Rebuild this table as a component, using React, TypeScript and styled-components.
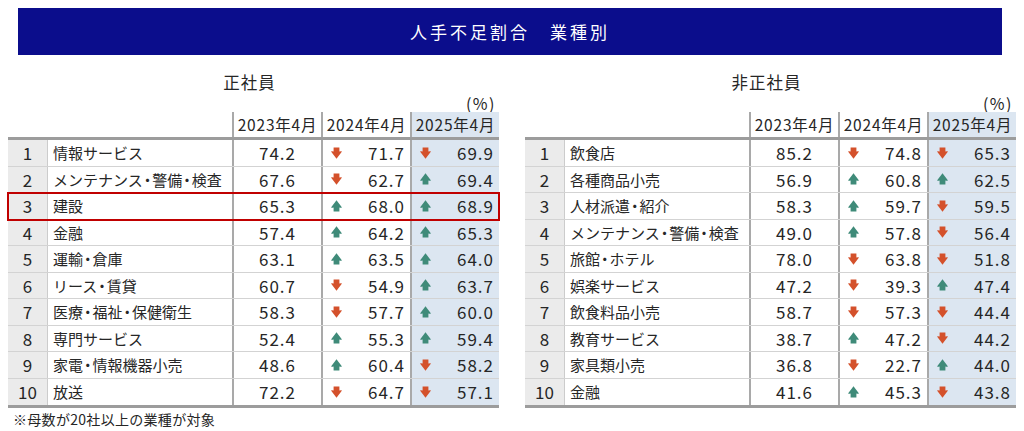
import React from 'react';
import styled, { createGlobalStyle } from 'styled-components';

const GlobalStyle = createGlobalStyle`
  html, body {
    margin: 0;
    padding: 0;
    background: #ffffff;
  }
  body {
    font-family: "Noto Sans CJK JP", "Noto Sans", sans-serif;
    color: #262626;
  }
`;

type Trend = 'up' | 'down';

interface RowData {
  rank: number;
  name: string;
  y2023: string;
  t2024: Trend;
  y2024: string;
  t2025: Trend;
  y2025: string;
}

const regular: RowData[] = [
  { rank: 1, name: '情報サービス', y2023: '74.2', t2024: 'down', y2024: '71.7', t2025: 'down', y2025: '69.9' },
  { rank: 2, name: 'メンテナンス・警備・検査', y2023: '67.6', t2024: 'down', y2024: '62.7', t2025: 'up', y2025: '69.4' },
  { rank: 3, name: '建設', y2023: '65.3', t2024: 'up', y2024: '68.0', t2025: 'up', y2025: '68.9' },
  { rank: 4, name: '金融', y2023: '57.4', t2024: 'up', y2024: '64.2', t2025: 'up', y2025: '65.3' },
  { rank: 5, name: '運輸・倉庫', y2023: '63.1', t2024: 'up', y2024: '63.5', t2025: 'up', y2025: '64.0' },
  { rank: 6, name: 'リース・賃貸', y2023: '60.7', t2024: 'down', y2024: '54.9', t2025: 'up', y2025: '63.7' },
  { rank: 7, name: '医療・福祉・保健衛生', y2023: '58.3', t2024: 'down', y2024: '57.7', t2025: 'up', y2025: '60.0' },
  { rank: 8, name: '専門サービス', y2023: '52.4', t2024: 'up', y2024: '55.3', t2025: 'up', y2025: '59.4' },
  { rank: 9, name: '家電・情報機器小売', y2023: '48.6', t2024: 'up', y2024: '60.4', t2025: 'down', y2025: '58.2' },
  { rank: 10, name: '放送', y2023: '72.2', t2024: 'down', y2024: '64.7', t2025: 'down', y2025: '57.1' },
];

const nonRegular: RowData[] = [
  { rank: 1, name: '飲食店', y2023: '85.2', t2024: 'down', y2024: '74.8', t2025: 'down', y2025: '65.3' },
  { rank: 2, name: '各種商品小売', y2023: '56.9', t2024: 'up', y2024: '60.8', t2025: 'up', y2025: '62.5' },
  { rank: 3, name: '人材派遣・紹介', y2023: '58.3', t2024: 'up', y2024: '59.7', t2025: 'down', y2025: '59.5' },
  { rank: 4, name: 'メンテナンス・警備・検査', y2023: '49.0', t2024: 'up', y2024: '57.8', t2025: 'down', y2025: '56.4' },
  { rank: 5, name: '旅館・ホテル', y2023: '78.0', t2024: 'down', y2024: '63.8', t2025: 'down', y2025: '51.8' },
  { rank: 6, name: '娯楽サービス', y2023: '47.2', t2024: 'down', y2024: '39.3', t2025: 'up', y2025: '47.4' },
  { rank: 7, name: '飲食料品小売', y2023: '58.7', t2024: 'down', y2024: '57.3', t2025: 'down', y2025: '44.4' },
  { rank: 8, name: '教育サービス', y2023: '38.7', t2024: 'up', y2024: '47.2', t2025: 'down', y2025: '44.2' },
  { rank: 9, name: '家具類小売', y2023: '36.8', t2024: 'down', y2024: '22.7', t2025: 'up', y2025: '44.0' },
  { rank: 10, name: '金融', y2023: '41.6', t2024: 'up', y2024: '45.3', t2025: 'down', y2025: '43.8' },
];

const COLS = '40px 184px 89px 89px 89px';
const BLUE = '#dce6f1';
const RULE = '#a9a9a9';

const Page = styled.div`
  width: 1024px;
  height: 431px;
  box-sizing: border-box;
  padding: 8px 8px 0 8px;
  overflow: hidden;
`;

const Banner = styled.div`
  margin: 0 14px 0 10px;
  height: 47px;
  background: #0b0d8c;
  color: #ffffff;
  display: flex;
  align-items: center;
  justify-content: center;
  font-size: 17px;
  letter-spacing: 3px;
`;

const Panels = styled.div`
  display: flex;
  gap: 26px;
`;

const Panel = styled.div`
  width: 491px;
  display: flex;
  flex-direction: column;
`;

const PanelTitle = styled.div`
  margin-top: 16px;
  height: 23px;
  line-height: 23px;
  font-size: 16.5px;
  letter-spacing: 1px;
  text-align: center;
  padding-right: 8px;
`;

const Unit = styled.div`
  height: 18px;
  line-height: 18px;
  font-size: 16px;
  letter-spacing: 1.5px;
  text-align: right;
  padding-right: 3px;
`;

const HeaderRow = styled.div`
  display: grid;
  grid-template-columns: ${COLS};
  height: 25px;
  border-bottom: 3px solid #9c9c9c;
`;

const HeadCell = styled.div<{ $hi?: boolean }>`
  border-left: 2px solid ${RULE};
  background: ${(p) => (p.$hi ? BLUE : 'transparent')};
  font-size: 15.5px;
  letter-spacing: 0.8px;
  line-height: 25px;
  text-align: center;
  white-space: nowrap;
`;

const Body = styled.div`
  border-bottom: 3px solid #9c9c9c;
`;

const Row = styled.div<{ $mark?: boolean }>`
  display: grid;
  grid-template-columns: ${COLS};
  height: 26.5px;
  box-sizing: border-box;
  border-bottom: 1px solid #d3d3d3;
  position: relative;
  z-index: ${(p) => (p.$mark ? 2 : 0)};
  outline: ${(p) => (p.$mark ? '2.5px solid #c00000' : 'none')};
  outline-offset: -1px;

  &:last-child {
    border-bottom: none;
  }
`;

const RankCell = styled.div`
  background: #ebebeb;
  border-right: 1px solid #cccccc;
  font-size: 17px;
  display: flex;
  align-items: center;
  justify-content: center;
`;

const NameCell = styled.div`
  padding-left: 5px;
  font-size: 15px;
  display: flex;
  align-items: center;
  white-space: nowrap;
`;

const Dot = styled.span`
  font-feature-settings: "palt";
  padding: 0 1px;
`;

const ValueCell = styled.div<{ $hi?: boolean; $arrow?: boolean }>`
  border-left: 2px solid ${RULE};
  background: ${(p) => (p.$hi ? BLUE : '#ffffff')};
  display: flex;
  align-items: center;
  justify-content: ${(p) => (p.$arrow ? 'space-between' : 'center')};
  padding: ${(p) => (p.$arrow ? '0 5px 0 8px' : '0')};
  font-size: 17px;
  letter-spacing: 1px;
`;

const Note = styled.div`
  padding-left: 5px;
  margin-top: 1px;
  font-size: 14px;
  letter-spacing: 0.3px;
  line-height: 20px;
`;

const Arrow = ({ dir }: { dir: Trend }) => (
  <svg width="11" height="12" viewBox="0 0 11 12" style={{ flex: 'none' }}>
    {dir === 'down' ? (
      <path
        d="M2.6 0.5 H8.4 V4.6 Q9.8 4 11 4.4 L5.5 11.8 L0 4.4 Q1.2 4 2.6 4.6 Z"
        fill="#d4512b"
      />
    ) : (
      <path
        d="M2.6 11.5 H8.4 V7.4 Q9.8 8 11 7.6 L5.5 0.2 L0 7.6 Q1.2 8 2.6 7.4 Z"
        fill="#3f8b79"
      />
    )}
  </svg>
);

const Name = ({ text }: { text: string }) => {
  const parts = text.split('・');
  return (
    <NameCell>
      {parts.map((part, i) => (
        <React.Fragment key={i}>
          {i > 0 && <Dot>・</Dot>}
          {part}
        </React.Fragment>
      ))}
    </NameCell>
  );
};

const RankTable = ({ title, rows, mark }: { title: string; rows: RowData[]; mark?: number }) => (
  <Panel>
    <PanelTitle>{title}</PanelTitle>
    <Unit>(%)</Unit>
    <HeaderRow>
      <span />
      <span />
      <HeadCell>2023年4月</HeadCell>
      <HeadCell>2024年4月</HeadCell>
      <HeadCell $hi>2025年4月</HeadCell>
    </HeaderRow>
    <Body>
      {rows.map((r) => (
        <Row key={r.rank} $mark={r.rank === mark}>
          <RankCell>{r.rank}</RankCell>
          <Name text={r.name} />
          <ValueCell>{r.y2023}</ValueCell>
          <ValueCell $arrow>
            <Arrow dir={r.t2024} />
            <span>{r.y2024}</span>
          </ValueCell>
          <ValueCell $arrow $hi>
            <Arrow dir={r.t2025} />
            <span>{r.y2025}</span>
          </ValueCell>
        </Row>
      ))}
    </Body>
  </Panel>
);

export default function App() {
  return (
    <Page>
      <GlobalStyle />
      <Banner>人手不足割合　業種別</Banner>
      <Panels>
        <RankTable title="正社員" rows={regular} mark={3} />
        <RankTable title="非正社員" rows={nonRegular} />
      </Panels>
      <Note>※母数が20社以上の業種が対象</Note>
    </Page>
  );
}
